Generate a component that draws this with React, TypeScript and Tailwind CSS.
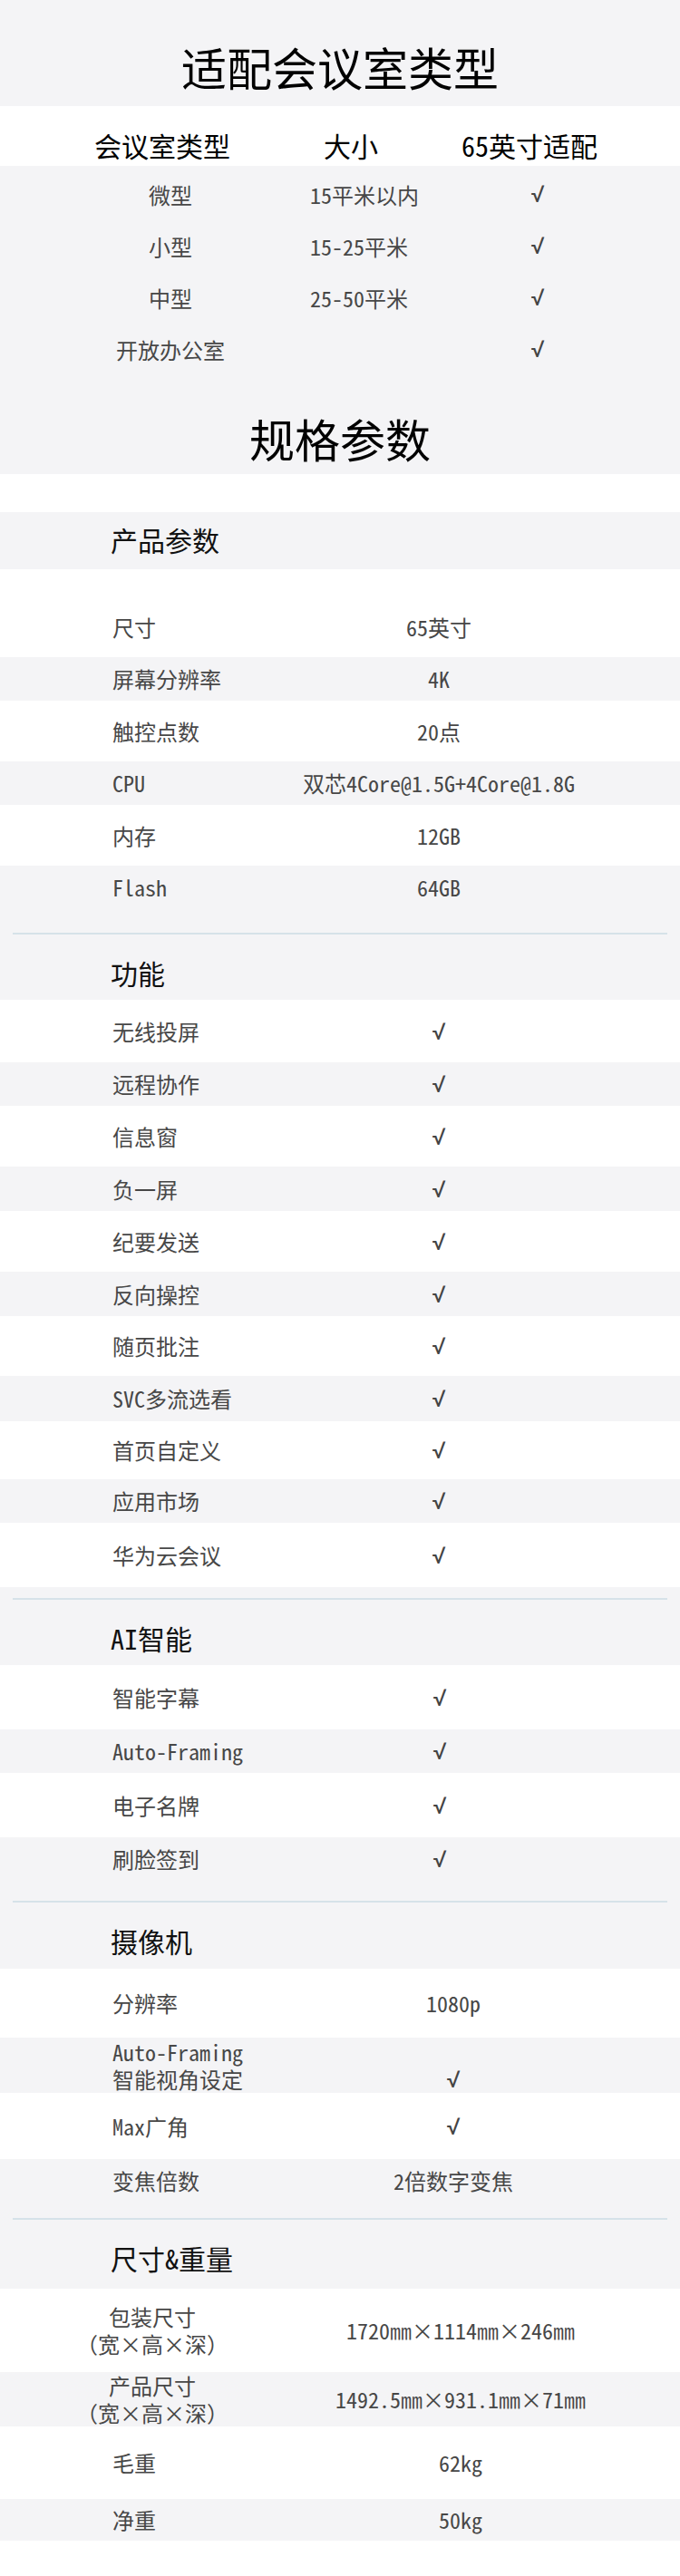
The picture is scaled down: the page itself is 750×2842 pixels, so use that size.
import React from "react";

const MONO = "font-['Noto_Sans_Mono_CJK_SC','Noto_Sans_CJK_SC',sans-serif]";

type Row = {
  label: string[];
  value: string;
  h: string;
  gray?: boolean;
  centerLabel?: boolean;
  lowValue?: boolean;
};

type Section = {
  title: string;
  gapBefore: string;
  headPad: string;
  valueBox: string;
  lead?: string;
  rows: Row[];
};

const roomRows = [
  { type: "微型", size: "15平米以内" },
  { type: "小型", size: "15-25平米" },
  { type: "中型", size: "25-50平米" },
  { type: "开放办公室", size: "" },
];

const sections: Section[] = [
  {
    title: "产品参数",
    gapBefore: "",
    headPad: "",
    valueBox: "w-[248px]",
    lead: "h-[30px]",
    rows: [
      { label: ["尺寸"], value: "65英寸", h: "h-[67px]" },
      { label: ["屏幕分辨率"], value: "4K", h: "h-[48px]", gray: true },
      { label: ["触控点数"], value: "20点", h: "h-[67px]" },
      { label: ["CPU"], value: "双芯4Core@1.5G+4Core@1.8G", h: "h-[48px]", gray: true },
      { label: ["内存"], value: "12GB", h: "h-[67px]" },
      { label: ["Flash"], value: "64GB", h: "h-[48px]", gray: true },
    ],
  },
  {
    title: "功能",
    gapBefore: "h-[26px]",
    headPad: "pt-[22px] pb-[10px]",
    valueBox: "w-[248px]",
    rows: [
      { label: ["无线投屏"], value: "√", h: "h-[69px]" },
      { label: ["远程协作"], value: "√", h: "h-[48px]", gray: true },
      { label: ["信息窗"], value: "√", h: "h-[67px]" },
      { label: ["负一屏"], value: "√", h: "h-[49px]", gray: true },
      { label: ["纪要发送"], value: "√", h: "h-[67px]" },
      { label: ["反向操控"], value: "√", h: "h-[49px]", gray: true },
      { label: ["随页批注"], value: "√", h: "h-[66px]" },
      { label: ["SVC多流选看"], value: "√", h: "h-[50px]", gray: true },
      { label: ["首页自定义"], value: "√", h: "h-[64px]" },
      { label: ["应用市场"], value: "√", h: "h-[48px]", gray: true },
      { label: ["华为云会议"], value: "√", h: "h-[71px]" },
    ],
  },
  {
    title: "AI智能",
    gapBefore: "h-[12px]",
    headPad: "pt-[22px] pb-[10px]",
    valueBox: "w-[250px]",
    rows: [
      { label: ["智能字幕"], value: "√", h: "h-[71px]" },
      { label: ["Auto-Framing"], value: "√", h: "h-[48px]", gray: true },
      { label: ["电子名牌"], value: "√", h: "h-[71px]" },
      { label: ["刷脸签到"], value: "√", h: "h-[48px]", gray: true },
    ],
  },
  {
    title: "摄像机",
    gapBefore: "h-[22px]",
    headPad: "pt-[22px] pb-[11px]",
    valueBox: "w-[280px]",
    rows: [
      { label: ["分辨率"], value: "1080p", h: "h-[76px]" },
      { label: ["Auto-Framing", "智能视角设定"], value: "√", h: "h-[61px]", gray: true, lowValue: true },
      { label: ["Max广角"], value: "√", h: "h-[73px]" },
      { label: ["变焦倍数"], value: "2倍数字变焦", h: "h-[48px]", gray: true },
    ],
  },
  {
    title: "尺寸&重量",
    gapBefore: "h-[17px]",
    headPad: "pt-[22px] pb-[14px]",
    valueBox: "w-[296px]",
    rows: [
      { label: ["包装尺寸", "（宽×高×深）"], value: "1720㎜×1114㎜×246㎜", h: "h-[92px]", centerLabel: true },
      { label: ["产品尺寸", "（宽×高×深）"], value: "1492.5㎜×931.1㎜×71㎜", h: "h-[60px]", gray: true, centerLabel: true },
      { label: ["毛重"], value: "62kg", h: "h-[80px]" },
      { label: ["净重"], value: "50kg", h: "h-[46px]", gray: true },
    ],
  },
];

// √ in Roboto: a plain tick without the long radical bar
const Tick = () => <span className="font-['Roboto',sans-serif] text-[26px] text-[#444]">√</span>;

const Value = ({ v }: { v: string }) => (v === "√" ? <Tick /> : <>{v}</>);

const SpecRow = ({ row, valueBox }: { row: Row; valueBox: string }) => (
  <div className={`flex items-center ${row.h} ${row.gray ? "bg-[#f4f4f6]" : "bg-white"}`}>
    <div className="w-[360px] shrink-0">
      {row.centerLabel ? (
        <div className="ml-[72px] w-[192px] text-center">
          {row.label.map((l) => (
            <div key={l} className="leading-[30px] whitespace-nowrap">{l}</div>
          ))}
        </div>
      ) : (
        <div className="pl-[124px]">
          {row.label.map((l) => (
            <div key={l} className={`${row.label.length > 1 ? "leading-[30px]" : "leading-[28px]"} whitespace-nowrap`}>{l}</div>
          ))}
        </div>
      )}
    </div>
    <div className={`flex justify-center whitespace-nowrap leading-[28px] shrink-0 ${valueBox} ${row.lowValue ? "pt-[30px]" : ""}`}>
      <Value v={row.value} />
    </div>
  </div>
);

export default function App() {
  return (
    <div className={`w-[750px] bg-white text-[24px] text-[#474747] ${MONO}`}>
      {/* 适配会议室类型 */}
      <div className="bg-[#f4f4f6] h-[117px] pt-[44px]">
        <div className="text-center text-[50px] leading-[58px] text-black">适配会议室类型</div>
      </div>
      <div className="bg-white h-[66px] pt-[23px] flex text-[30px] leading-[40px] text-black">
        <div className="ml-[89px] w-[180px] text-center">会议室类型</div>
        <div className="w-[236px] text-center">大小</div>
        <div className="w-[158px] text-center">65英寸适配</div>
      </div>
      <div className="bg-[#f4f4f6] pt-[3px] pb-[11px]">
        {roomRows.map((r) => (
          <div key={r.type} className="flex items-center h-[57px]">
            <div className="ml-[100px] w-[176px] text-center">{r.type}</div>
            <div className="ml-[66px] w-[200px]">{r.size}</div>
            <div className="w-[102px] text-center"><Tick /></div>
          </div>
        ))}
        <div className="mt-[40px] text-center text-[50px] leading-[58px] text-black">规格参数</div>
      </div>
      <div className="h-[42px] bg-white" />

      {sections.map((s, i) => (
        <div key={s.title}>
          {i === 0 ? (
            <div className="bg-[#f4f4f6] h-[63px] pt-[10px] pl-[122px] text-[30px] leading-[40px] text-[#111]">
              {s.title}
            </div>
          ) : (
            <div className="bg-[#f4f4f6]">
              <div className={s.gapBefore} />
              <div className="mx-[14px] h-[2px] bg-[#d6e2e9]" />
              <div className={`pl-[122px] text-[30px] leading-[40px] text-[#111] ${s.headPad}`}>{s.title}</div>
            </div>
          )}
          {s.lead && <div className={`bg-white ${s.lead}`} />}
          {s.rows.map((r) => (
            <SpecRow key={r.label.join("")} row={r} valueBox={s.valueBox} />
          ))}
        </div>
      ))}
      <div className="h-[39px] bg-white" />
    </div>
  );
}
